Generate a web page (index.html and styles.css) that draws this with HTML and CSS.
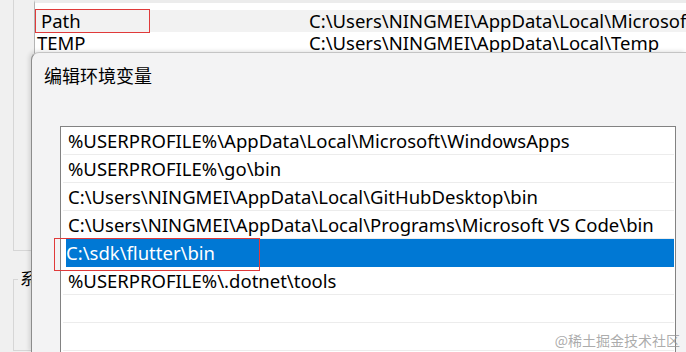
FILE: index.html
```html
<!DOCTYPE html>
<html lang="zh-CN">
<head>
  <meta charset="UTF-8">
  <title>编辑环境变量</title>
  <link rel="stylesheet" href="styles.css">
</head>
<body>
  <div class="bg-window">
    <div class="user-group">
      <div class="var-list">
        <div class="var-row stub"></div>
        <div class="var-row current">
          <span class="var-name"><span class="mark">Path</span></span>
          <span class="var-value">C:\Users\NINGMEI\AppData\Local\Microsoft\WindowsApps</span>
        </div>
        <div class="var-row">
          <span class="var-name">TEMP</span>
          <span class="var-value">C:\Users\NINGMEI\AppData\Local\Temp</span>
        </div>
        <div class="var-row">
          <span class="var-name">TMP</span>
          <span class="var-value">C:\Users\NINGMEI\AppData\Local\Temp</span>
        </div>
      </div>
    </div>
    <fieldset class="sys-group">
      <legend>系统变量(S)</legend>
    </fieldset>
  </div>

  <div class="dialog">
    <div class="dialog-title">编辑环境变量</div>
    <div class="path-list">
      <div class="path-row">%USERPROFILE%\AppData\Local\Microsoft\WindowsApps</div>
      <div class="path-row">%USERPROFILE%\go\bin</div>
      <div class="path-row">C:\Users\NINGMEI\AppData\Local\GitHubDesktop\bin</div>
      <div class="path-row">C:\Users\NINGMEI\AppData\Local\Programs\Microsoft VS Code\bin</div>
      <div class="path-row selected"><span class="mark">C:\sdk\flutter\bin</span></div>
      <div class="path-row">%USERPROFILE%\.dotnet\tools</div>
      <div class="path-row"></div>
      <div class="path-row"></div>
    </div>
  </div>

  <div class="watermark">@稀土掘金技术社区</div>
</body>
</html>
```

FILE: styles.css
```css
body {
  margin: 0;
  width: 686px;
  height: 352px;
  overflow: hidden;
  position: relative;
  background-color: #f0f0f0;
  font-family: 'Noto Sans', 'Noto Sans CJK SC', sans-serif;
  font-size: 18.5px;
  color: #000;
}
.bg-window {
  padding-left: 13px;
}
.user-group {
  height: 250px;
  border-left: 1px solid #d6d6d6;
  border-bottom: 1px solid #d6d6d6;
  padding-left: 20px;
}
.var-list {
  height: 250px;
  background-color: #fff;
  border-left: 1px solid #b4b4b4;
  border-top: 3px solid #ececec;
  box-sizing: border-box;
  overflow: hidden;
}
.var-row {
  display: flex;
  height: 22px;
  line-height: 22px;
  white-space: nowrap;
}
.var-row.stub {
  height: 7px;
}
.var-row.current {
  background-color: #f2f2f2;
}
.var-name {
  width: 272px;
  flex-shrink: 0;
  padding-left: 2px;
}
.var-name .mark {
  display: inline-block;
  width: 113px;
  margin-left: -1px;
  padding-left: 5px;
  box-sizing: border-box;
  outline: 1px solid #e03a3a;
}
.var-value {
  white-space: nowrap;
}
.sys-group {
  margin: 18px 0 0;
  padding: 0;
  height: 80px;
  border: 1px solid #d6d6d6;
  border-right: none;
}
.sys-group legend {
  margin-left: 4px;
  padding: 0 2px;
  line-height: 20px;
  font-size: 17px;
}
.dialog {
  position: absolute;
  left: 31px;
  top: 52px;
  right: 0;
  bottom: 0;
  background-color: #f3f3f4;
  border-left: 1px solid #8c8c8c;
  border-top: 1px solid #c4c4c4;
  border-top-left-radius: 8px;
  box-shadow: -2px -1px 4px rgba(0, 0, 0, 0.12);
  overflow: hidden;
}
.dialog-title {
  padding: 10px 0 0 12px;
  height: 63px;
  font-size: 18px;
  line-height: 24px;
  font-family: 'Noto Sans CJK SC', sans-serif;
}
.path-list {
  margin: 0 10px 0 28px;
  height: 240px;
  background-color: #fff;
  border: 1px solid #828282;
  padding: 0 1px 0 2px;
}
.path-row {
  height: 27px;
  line-height: 27px;
  border-bottom: 1px solid #ececec;
  padding-left: 5px;
  white-space: nowrap;
}
.path-row.selected {
  margin-left: 3px;
  padding-left: 2px;
  background-color: #0078d4;
  color: #fff;
  border-bottom-color: #0078d4;
}
.path-row.selected .mark {
  display: inline-block;
  width: 204px;
  margin-left: -13px;
  padding-left: 11px;
  box-sizing: border-box;
  height: 31px;
  outline: 1px solid #e03a3a;
}
.watermark {
  position: absolute;
  right: 6px;
  bottom: 2px;
  font-family: 'Noto Sans CJK SC', sans-serif;
  font-size: 14px;
  color: rgba(150, 150, 150, 0.8);
}
```
